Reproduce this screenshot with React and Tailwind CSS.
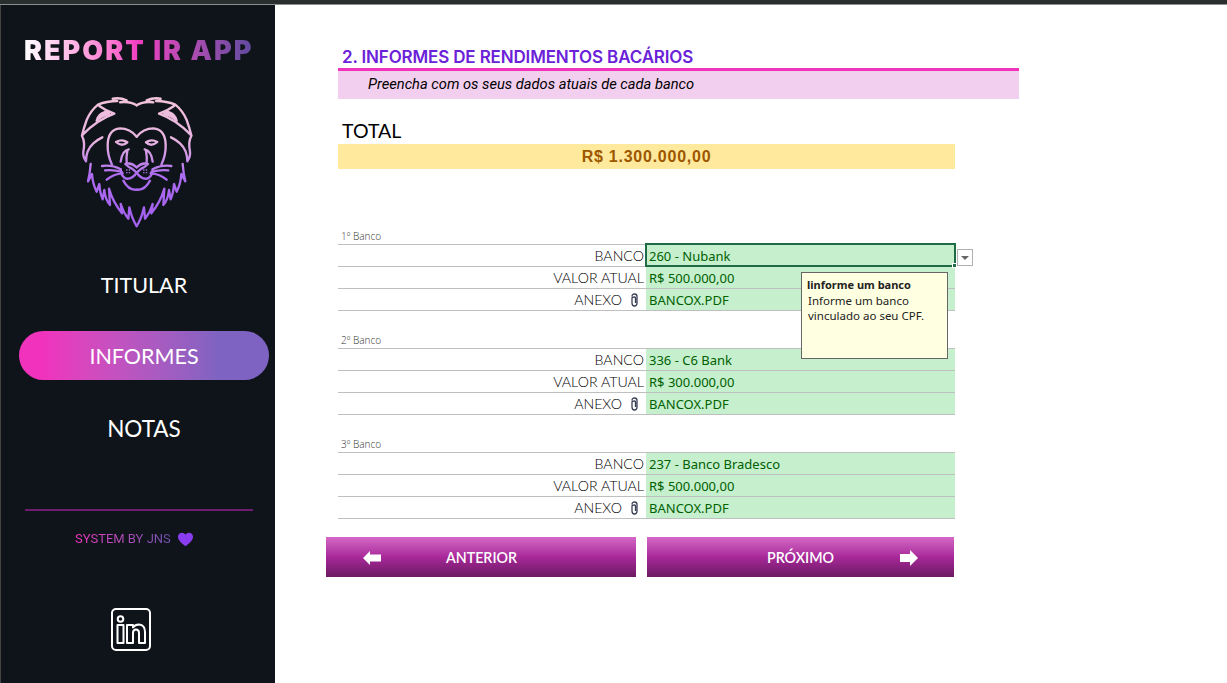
const banks = [
  { label: "1º Banco", bank: "260 - Nubank", value: "R$ 500.000,00" },
  { label: "2º Banco", bank: "336 - C6 Bank", value: "R$ 300.000,00" },
  { label: "3º Banco", bank: "237 - Banco Bradesco", value: "R$ 500.000,00" },
];

// half of the lion, mirrored below
function LionHalf() {
  return (
    <>
      <path d="M200 46 Q180 33 150 37 L170 31 Q150 22 128 26 L142 33 Q110 33 84 44 Q62 62 50 90 Q42 112 36 136 Q80 90 133 71 Q110 64 88 48" />
      <path d="M80 92 Q84 72 104 66 Q112 66 118 72 Q98 74 80 92 M92 80 Q96 72 106 70" />
      <path d="M36 138 Q46 155 40 185 Q38 200 48 214 Q48 180 70 160 Q84 148 97 142" />
      <path d="M62 222 Q60 250 54 274 L66 252 Q68 282 80 305 L88 282 Q90 310 98 328 L103 300 Q106 330 120 345 L117 296 Q128 335 156 370 L152 342 Q160 368 175 386 L178 352 Q186 388 200 408" />
      <path d="M200 140 Q180 115 150 115 Q114 118 113 165 Q112 195 126 224" />
      <path d="M138 156 Q156 146 172 157 Q156 172 138 156 Z" />
      <path d="M176 178 Q156 182 152 215 M172 182 Q168 204 170 218" />
      <path d="M200 232 Q184 216 166 222 Q176 232 186 236 L200 248 Q188 268 168 266 Q152 258 152 238" />
      <path d="M96 228 Q126 224 152 238 M105 241 Q130 238 156 246 M110 269 Q130 252 158 250" />
      <path d="M160 272 Q176 302 200 299" />
      <path d="M170 240 h1 M178 240 h1 M170 248 h1 M178 248 h1" strokeWidth="4" />
    </>
  );
}

function Lion() {
  return (
    <svg width="135" height="145" viewBox="0 0 405 435" fill="none" stroke="url(#lionGrad)" strokeWidth="7" strokeLinejoin="round" strokeLinecap="round">
      <defs>
        <linearGradient id="lionGrad" gradientUnits="userSpaceOnUse" x1="0" y1="20" x2="0" y2="410">
          <stop offset="0" stopColor="#f3c4dc" />
          <stop offset="0.35" stopColor="#e7b2e0" />
          <stop offset="0.6" stopColor="#ad6cf0" />
          <stop offset="1" stopColor="#a35ff0" />
        </linearGradient>
      </defs>
      <LionHalf />
      <g transform="translate(400 0) scale(-1 1)">
        <LionHalf />
      </g>
    </svg>
  );
}

function LinkedIn() {
  return (
    <svg width="42" height="45" viewBox="0 0 42 45" fill="none" stroke="white" strokeWidth="2" strokeLinejoin="round">
      <rect x="2" y="2" width="38" height="41" rx="4" />
      <circle cx="10.5" cy="12" r="2.8" />
      <path d="M7.5 18 h6 v18 h-6 Z" />
      <path d="M17 18 h6 v2.5 Q25 17.5 29 17.5 Q35 18 35 25 V36 h-6 V26 Q29 22.5 26 22.5 Q23 22.5 23 26 V36 h-6 Z" />
    </svg>
  );
}

function Clip() {
  return (
    <svg width="9" height="14" viewBox="0 0 9 14" fill="none" stroke="#3b3f55" strokeWidth="1.3">
      <path d="M2 3.5 Q2 1 4.5 1 Q7 1 7 3.5 V10 Q7 13 4.5 13 Q2 13 2 10 V5 Q2 4 4.5 4 Q5.5 4 5.5 5 V10" />
    </svg>
  );
}

function Row({ label, value, clip }) {
  return (
    <div className="flex h-[22px] border-b border-[#bfbfbf]">
      <div className="w-[308px] pt-[1px] flex items-center justify-end pr-[2px] text-[14.2px] text-black font-light font-['Lato',sans-serif]">
        {label}
        {clip && <span className="ml-[8px] mr-[5px] flex"><Clip /></span>}
      </div>
      <div className="w-[309px] pt-[2px] bg-[#c6efce] text-[#006100] flex items-center pl-[3px] text-[13px] font-['Noto_Sans',sans-serif]">
        {value}
      </div>
    </div>
  );
}

export default function App() {
  return (
    <div className="w-[1227px] h-[683px] overflow-hidden bg-white flex flex-col">
      <div className="h-[5px] shrink-0 bg-[#2a2e2e] border-b border-[#8a8f8f]"></div>
      <div className="flex flex-1">
        <aside className="w-[275px] border-l border-[#444] bg-[#0e1419] flex flex-col items-start text-white">
          <h1 className="ml-[23px] mt-[30px] text-[27px] leading-[32px] font-black tracking-[2px] font-['Inter',sans-serif] text-transparent bg-clip-text bg-gradient-to-r from-white via-[#f03cc0] to-[#5f4a9e]">
            REPORT IR APP
          </h1>
          <div className="ml-[69px] mt-[23px] h-[145px]"><Lion /></div>
          <div className="ml-[18px] w-[250px] text-center mt-[33px] h-[34px] leading-[34px] text-[21.5px] font-['Lato',sans-serif]">TITULAR</div>
          <div className="ml-[18px] mt-[29px] w-[250px] h-[49px] pt-[1px] rounded-full bg-gradient-to-r from-[#f032bd] from-10% to-[#7f63c2] to-80% flex items-center justify-center text-[21.5px] font-['Lato',sans-serif]">INFORMES</div>
          <div className="ml-[18px] w-[250px] text-center mt-[31px] h-[34px] leading-[36px] text-[22.5px] font-['Lato',sans-serif]">NOTAS</div>
          <div className="ml-[24px] mt-[64px] w-[228px] h-[2px] bg-[#6e1c6e]"></div>
          <div className="ml-[74px] mt-[19px] flex items-center gap-[6px]">
            <span className="text-[13px] leading-[18px] font-['Roboto',sans-serif] text-transparent bg-clip-text bg-gradient-to-r from-[#f032bd] to-[#6f50b0]">SYSTEM BY JNS</span>
            <svg width="17" height="15" viewBox="0 0 24 22" fill="#8a3df0"><path d="M12 21 C4 15 1 11 1 7 C1 3 4 1 7 1 C9 1 11 2 12 4 C13 2 15 1 17 1 C20 1 23 3 23 7 C23 11 20 15 12 21 Z" /></svg>
          </div>
          <div className="ml-[109px] mt-[59px]"><LinkedIn /></div>
        </aside>

        <main className="relative flex-1 pl-[63px]">
          <div className="w-[681px] mt-[40px]">
            <h2 className="h-[23px] pl-[4px] text-[17px] leading-[24px] font-semibold text-[#6b21d8] font-['Inter',sans-serif] tracking-[-0.15px]">2. INFORMES DE RENDIMENTOS BACÁRIOS</h2>
            <div className="h-[3px] bg-[#f032bd]"></div>
            <div className="h-[28px] pb-[1px] bg-[#f2cfee] pl-[30px] flex items-center text-[14.7px] italic text-black font-['Roboto',sans-serif]">Preencha com os seus dados atuais de cada banco</div>
          </div>

          <div className="w-[617px]">
            <div className="mt-[21px] h-[24px] pl-[4px] text-[19.5px] leading-[22px] text-black font-['Lato',sans-serif]">TOTAL</div>
            <div className="h-[25px] pt-[1px] bg-[#ffe99c] flex items-center justify-center text-[16px] font-bold text-[#9c5700] font-['Liberation_Sans',sans-serif] tracking-[0.75px]">R$ 1.300.000,00</div>

            <div className="mt-[60px] flex flex-col gap-[22px]">
              {banks.map((b) => (
                <section key={b.label}>
                  <div className="h-[16px] pl-[3px] text-[10px] leading-[15px] text-[#333] font-light font-['Open_Sans',sans-serif] border-b border-[#bfbfbf]">{b.label}</div>
                  <Row label="BANCO" value={b.bank} />
                  <Row label="VALOR ATUAL" value={b.value} />
                  <Row label="ANEXO" value="BANCOX.PDF" clip />
                </section>
              ))}
            </div>

            <div className="mt-[18px] -ml-[12px] flex gap-[11px] text-white text-[14.25px] font-semibold font-['Lato',sans-serif]">
              <button className="relative w-[310px] h-[40px] pl-[1px] pt-[1px] flex items-center justify-center bg-gradient-to-b from-[#d468c6] via-[#a8289a] to-[#6c1a62]">
                <svg className="absolute left-[37px] top-[14px]" width="18" height="14" viewBox="0 0 18 14" fill="white"><path d="M0 7 L7 0 V3.5 H18 V10.5 H7 V14 Z" /></svg>
                ANTERIOR
              </button>
              <button className="relative w-[307px] h-[40px] pt-[1px] flex items-center justify-center bg-gradient-to-b from-[#d468c6] via-[#a8289a] to-[#6c1a62]">
                PRÓXIMO
                <svg className="absolute left-[253px] top-[13px]" width="18" height="16" viewBox="0 0 18 16" fill="white"><path d="M18 8 L10 0 V4 H0 V12 H10 V16 Z" /></svg>
              </button>
            </div>
          </div>

          {/* selected cell, its dropdown and the validation tooltip */}
          <div className="absolute left-[370px] top-[238px] w-[311px] h-[24px] border-2 border-[#1f6b45]">
            <div className="absolute -right-[3px] -bottom-[3px] w-[5px] h-[5px] bg-[#1f6b45] border border-white"></div>
          </div>
          <div className="absolute left-[682px] top-[244px] w-[16px] h-[17px] bg-white border border-[#b0b0b0] flex items-center justify-center">
            <div className="w-0 h-0 border-x-[4px] border-x-transparent border-t-[4px] border-t-[#666]"></div>
          </div>
          <div className="absolute left-[526px] top-[267px] w-[147px] h-[87px] bg-[#ffffe1] border border-[#666] px-[5px] py-[4px] text-[11.5px] leading-[15px] text-[#222] font-['Noto_Sans',sans-serif]">
            <div className="font-bold text-[11px]">linforme um banco</div>
            <div className="pl-[1px] mt-[1px]">Informe um banco<br />vinculado ao seu CPF.</div>
          </div>
        </main>
      </div>
    </div>
  );
}
